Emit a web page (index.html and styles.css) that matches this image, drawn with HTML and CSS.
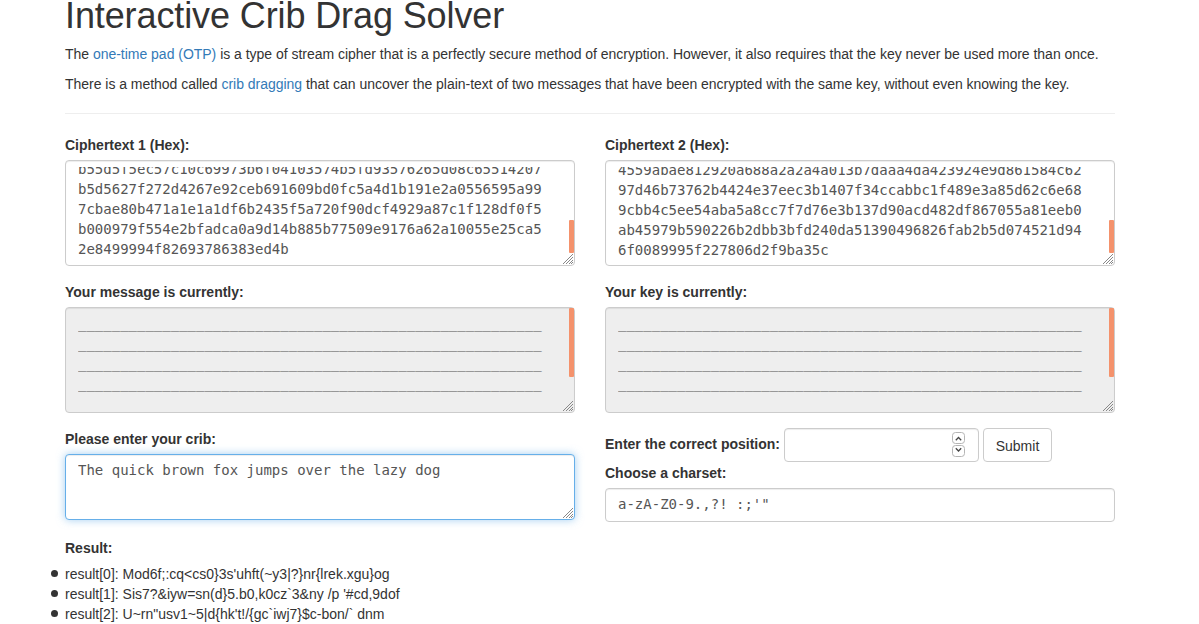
FILE: index.html
```html
<!DOCTYPE html>
<html lang="en">
<head>
<meta charset="utf-8">
<title>Interactive Crib Drag Solver</title>
<link rel="stylesheet" href="styles.css">
</head>
<body>
<main class="container">
  <h1 class="title">Interactive Crib Drag Solver</h1>
  <p class="intro intro-first">The <a href="#">one-time pad (OTP)</a> is a type of stream cipher that is a perfectly secure method of encryption. However, it also requires that the key never be used more than once.</p>
  <p class="intro intro-second">There is a method called <a href="#">crib dragging</a> that can uncover the plain-text of two messages that have been encrypted with the same key, without even knowing the key.</p>
  <hr class="rule">
  <div class="columns">
    <section class="column">
      <div class="group">
        <span class="label">Ciphertext 1 (Hex):</span>
        <div class="control area"><div class="text scrolled">b55d5f5ec57c10c69973b6f04103574b5fd93576265d08c65514207<br>b5d5627f272d4267e92ceb691609bd0fc5a4d1b191e2a0556595a99<br>7cbae80b471a1e1a1df6b2435f5a720f90dcf4929a87c1f128df0f5<br>b000979f554e2bfadca0a9d14b885b77509e9176a62a10055e25ca5<br>2e8499994f82693786383ed4b</div><i class="thumb thumb-end"></i><svg class="grip" viewBox="0 0 12 12"><path d="M1 11L11 1M4 11l7-7M7 11l4-4M9 11l2-2"/></svg></div>
      </div>
      <div class="group">
        <span class="label">Your message is currently:</span>
        <div class="control area readonly"><div class="text raised">_______________________________________________________<br>_______________________________________________________<br>_______________________________________________________<br>_______________________________________________________</div><i class="thumb thumb-start"></i><svg class="grip" viewBox="0 0 12 12"><path d="M1 11L11 1M4 11l7-7M7 11l4-4M9 11l2-2"/></svg></div>
      </div>
      <div class="group">
        <span class="label">Please enter your crib:</span>
        <div class="control crib focused"><div class="text raised">The quick brown fox jumps over the lazy dog</div><svg class="grip" viewBox="0 0 12 12"><path d="M1 11L11 1M4 11l7-7M7 11l4-4M9 11l2-2"/></svg></div>
      </div>
    </section>
    <section class="column">
      <div class="group">
        <span class="label">Ciphertext 2 (Hex):</span>
        <div class="control area"><div class="text scrolled lower">4559abae812920a688a2a2a4a013b7daaa4da423924e9d861584c62<br>97d46b73762b4424e37eec3b1407f34ccabbc1f489e3a85d62c6e68<br>9cbb4c5ee54aba5a8cc7f7d76e3b137d90acd482df867055a81eeb0<br>ab45979b590226b2dbb3bfd240da51390496826fab2b5d074521d94<br>6f0089995f227806d2f9ba35c</div><i class="thumb thumb-end"></i><svg class="grip" viewBox="0 0 12 12"><path d="M1 11L11 1M4 11l7-7M7 11l4-4M9 11l2-2"/></svg></div>
      </div>
      <div class="group">
        <span class="label">Your key is currently:</span>
        <div class="control area readonly"><div class="text raised">_______________________________________________________<br>_______________________________________________________<br>_______________________________________________________<br>_______________________________________________________</div><i class="thumb thumb-start"></i><svg class="grip" viewBox="0 0 12 12"><path d="M1 11L11 1M4 11l7-7M7 11l4-4M9 11l2-2"/></svg></div>
      </div>
      <div class="position">
        <span class="label inline-label">Enter the correct position:</span>
        <div class="control number"><svg class="spinner" width="14" height="26" viewBox="0 0 14 26"><rect x=".5" y=".5" width="12" height="11" rx="3"/><rect x=".5" y="13.5" width="12" height="11" rx="3"/><path d="M3.8 8.2l2.7-2.7 2.7 2.7M3.8 16.3L6.5 19l2.7-2.7"/></svg></div>
        <button class="submit" type="button">Submit</button>
      </div>
      <span class="label">Choose a charset:</span>
      <div class="control charset"><div class="text raised">a-zA-Z0-9.,?! :;'"</div></div>
    </section>
  </div>
  <section class="results">
    <span class="label">Result:</span>
    <ul class="list">
      <li>result[0]: Mod6f;:cq&lt;cs0}3s'uhft(~y3|?}nr{lrek.xgu}og</li>
      <li>result[1]: Sis7?&amp;iyw=sn(d}5.b0,k0cz`3&amp;ny /p '#cd,9dof</li>
      <li>result[2]: U~rn"usv1~5|d{hk't!/{gc`iwj7}$c-bon/` dnm</li>
    </ul>
  </section>
</main>
</body>
</html>
```
FILE: styles.css
```css
* { box-sizing: border-box; }
html, body { height: 100%; }
body {
  margin: 0;
  overflow: hidden;
  background: #fff;
  color: #333;
  font: 14px/20px "Liberation Sans", Arial, sans-serif;
}
a { color: #337ab7; text-decoration: none; }
.container { width: 1050px; margin: 0 0 0 65px; display: flow-root; }
.title { height: 34px; margin: 0 0 10px; font-size: 36px; font-weight: 400; line-height: 32px; letter-spacing: -.11px; }
.intro { margin: 0 0 10px; white-space: nowrap; }
.intro-first { letter-spacing: -.022px; }
.intro-second { letter-spacing: -.028px; }
.rule { height: 1px; margin: 19px 0 21px; border: 0; background: #eee; }
.columns { display: grid; grid-template-columns: 510px 510px; gap: 30px; }
.group { margin-bottom: 16px; }
.label { display: block; width: max-content; margin-bottom: 5px; font-weight: 700; white-space: nowrap; }
.control {
  position: relative;
  border: 1px solid #ccc;
  border-radius: 4px;
  padding: 6px 12px;
  background: #fff;
  box-shadow: inset 0 1px 1px rgba(0, 0, 0, .075);
  color: #555;
  font-family: "DejaVu Sans Mono", monospace;
}
.area { height: 106px; }
.crib { height: 66px; }
.text { height: 100%; overflow: hidden; white-space: pre; }
.scrolled { height: 92px; }
.scrolled::before { content: ""; display: block; margin-top: -8px; }
.scrolled.lower::before { margin-top: -7px; }
.raised { margin-top: -1px; }
.readonly { background: #eee; }
.focused {
  border-color: #66afe9;
  box-shadow: inset 0 1px 1px rgba(0, 0, 0, .075), 0 0 8px rgba(102, 175, 233, .6);
}
.thumb { position: absolute; right: 0; width: 5px; border-radius: 1px; background: #f4926c; }
.thumb-start { top: 0; height: 69px; }
.thumb-end { bottom: 12px; height: 33px; }
.grip { position: absolute; right: 0; bottom: 0; width: 12px; height: 12px; fill: none; stroke: #888; stroke-width: 1; }
.position { display: flex; height: 34px; margin: -1px 0 1px; }
.inline-label { width: 179px; margin: 6px 0 0; }
.number { width: 195px; height: 34px; }
.spinner { position: absolute; right: 12px; top: 3px; fill: #fff; stroke: #b5b5b5; }
.spinner path { fill: none; stroke: #444; stroke-width: 1.3; }
.submit {
  width: 69px;
  height: 34px;
  margin-left: 4px;
  padding: 2px 0 0;
  border: 1px solid #ccc;
  border-radius: 4px;
  background: #fff;
  color: #333;
  font: 14px/20px "Liberation Sans", Arial, sans-serif;
}
.charset { height: 34px; }
.results { margin-top: 2px; }
.list { margin: 6px 0 0; padding: 0; list-style: none; }
.list li { display: flex; align-items: center; width: max-content; height: 20px; white-space: pre; }
.list li::before { content: ""; width: 7px; height: 7px; margin: -1px 7px 0 -14px; border-radius: 50%; background: #333; }
```
